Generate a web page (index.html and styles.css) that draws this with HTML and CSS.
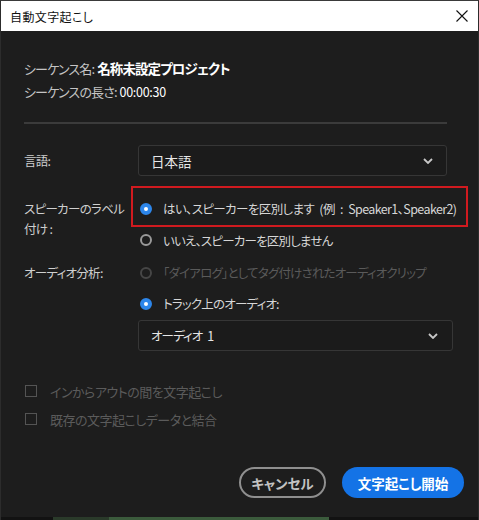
FILE: index.html
```html
<!DOCTYPE html>
<html lang="ja">
<head>
<meta charset="utf-8">
<title>自動文字起こし</title>
<link rel="stylesheet" href="styles.css">
</head>
<body>
<div class="window">
  <div class="titlebar">
    <span class="title">自動文字起こし</span>
    <svg class="close" width="12" height="12" viewBox="0 0 12 12"><path d="M0.5 0.5 L11.5 11.5 M11.5 0.5 L0.5 11.5" stroke="#111" stroke-width="1.1" fill="none"/></svg>
  </div>
  <div class="content">
    <div class="info">
      <div class="info-line"><span class="lbl">シーケンス名:</span> <span class="val bold">名称未設定プロジェクト</span></div>
      <div class="info-line"><span class="lbl">シーケンスの長さ:</span> <span class="val">00:00:30</span></div>
    </div>
    <div class="sep"></div>

    <div class="row row-lang">
      <div class="label">言語:</div>
      <div class="select sel-lang">
        <span>日本語</span>
        <svg width="10" height="6" viewBox="0 0 10 6"><path d="M1 1 L5 5 L9 1" stroke="#c8c8c8" stroke-width="1.8" fill="none"/></svg>
      </div>
    </div>

    <div class="row row-speaker">
      <div class="label label-2">スピーカーのラベル<br>付け :</div>
      <div class="opts">
        <div class="highlight">
          <div class="opt"><span class="radio on"></span><span class="otext wide">はい、スピーカーを区別します (例 : Speaker1、Speaker2)</span></div>
        </div>
        <div class="opt opt-2"><span class="radio"></span><span class="otext">いいえ、スピーカーを区別しません</span></div>
      </div>
    </div>

    <div class="row row-audio">
      <div class="label label-audio">オーディオ分析:</div>
      <div class="opts">
        <div class="opt opt-h"><span class="radio dis"></span><span class="otext dim">「ダイアログ」としてタグ付けされたオーディオクリップ</span></div>
        <div class="opt opt-h"><span class="radio on"></span><span class="otext">トラック上のオーディオ:</span></div>
        <div class="select sel-track">
          <span>オーディオ 1</span>
          <svg width="10" height="6" viewBox="0 0 10 6"><path d="M1 1 L5 5 L9 1" stroke="#c8c8c8" stroke-width="1.8" fill="none"/></svg>
        </div>
      </div>
    </div>

    <div class="checks">
      <div class="check"><span class="box"></span><span class="ctext">インからアウトの間を文字起こし</span></div>
      <div class="check"><span class="box"></span><span class="ctext">既存の文字起こしデータと結合</span></div>
    </div>

    <div class="buttons">
      <button class="btn btn-cancel">キャンセル</button>
      <button class="btn btn-primary">文字起こし開始</button>
    </div>
  </div>
  <div class="taskstrip"><span class="seg-a"></span><span class="seg-b"></span></div>
</div>
</body>
</html>
```

FILE: styles.css
```css
* { box-sizing: border-box; }
html, body { margin: 0; padding: 0; }
body {
  width: 479px;
  height: 520px;
  overflow: hidden;
  background: #1d1d1d;
  font-family: "Noto Sans CJK JP", "Noto Sans", sans-serif;
  font-feature-settings: "palt";
  color: #cfcfcf;
}
.window {
  width: 479px;
  height: 520px;
  display: flex;
  flex-direction: column;
  border-left: 1px solid #2c2c2c;
  border-right: 1px solid #2c2c2c;
  border-top: 1px solid #3a3a3a;
  background: #1d1d1d;
}
.titlebar {
  height: 30px;
  flex: 0 0 30px;
  background: #ffffff;
  display: flex;
  align-items: center;
  justify-content: space-between;
  padding: 0 9px 0 9px;
}
.title {
  font-size: 12px;
  color: #111;
  letter-spacing: 0.4px;
}
.close { display: block; margin-right: 1px; }

.content {
  flex: 1;
  padding: 0 0 0 23px;
  display: flex;
  flex-direction: column;
}
.info { margin-top: 25px; }
.info-line {
  height: 24px;
  line-height: 24px;
  font-size: 13px;
}
.lbl { color: #c4c4c4; letter-spacing: -0.85px; }
.val { color: #ffffff; font-size: 12.5px; letter-spacing: -0.3px; }
.val.bold { font-weight: 700; font-size: 13.5px; letter-spacing: -0.9px; }

.sep {
  margin-top: 18px;
  width: 423px;
  height: 2px;
  background: #3b3b3b;
}

.row { display: flex; }
.label {
  width: 114px;
  flex: 0 0 114px;
  font-size: 12.5px;
  letter-spacing: -0.7px;
  color: #cfcfcf;
  white-space: nowrap;
}
.row-lang { margin-top: 21px; align-items: center; }

.select {
  display: flex;
  align-items: center;
  justify-content: space-between;
  height: 31px;
  border: 1px solid #363636;
  border-radius: 3px;
  background: #1b1b1b;
  padding: 0 13px 0 12px;
  font-size: 13px;
  color: #e6e6e6;
}
.select svg { display: block; }
.sel-lang { width: 309px; font-size: 13.5px; }
.sel-track { width: 315px; margin-top: 1px; padding-right: 14px; letter-spacing: -0.9px; font-size: 12.5px; word-spacing: 3px; }

.row-speaker { margin-top: 10px; }
.label-2 { line-height: 20px; padding-top: 13px; }
.opts { display: flex; flex-direction: column; }
.highlight {
  margin-left: -7px;
  width: 337px;
  height: 41px;
  border: 2px solid #d11a1f;
  padding: 4px 0 0 5px;
  display: flex;
  align-items: center;
}
.opt {
  display: flex;
  align-items: center;
  font-size: 12.5px;
  color: #d6d6d6;
}
.opt-2 { height: 26px; }
.opt-h { height: 31px; }
.radio {
  width: 12px;
  height: 12px;
  border-radius: 50%;
  border: 2px solid #9a9a9a;
  margin: 0 11px 0 2px;
  flex: 0 0 12px;
  position: relative;
}
.radio.on {
  background: #2d86ea;
  border-color: #2d86ea;
}
.radio.on::after {
  content: "";
  position: absolute;
  left: 2px;
  top: 2px;
  width: 4px;
  height: 4px;
  border-radius: 50%;
  background: #ffffff;
}
.radio.dis { border-color: #464646; }
.otext { white-space: nowrap; letter-spacing: -0.8px; }
.otext.wide { letter-spacing: -0.6px; word-spacing: 3px; }
.otext.dim { color: #5a5a5a; }

.row-audio { margin-top: 4px; }
.label-audio { height: 31px; line-height: 31px; }

.checks { margin-top: 26px; display: flex; flex-direction: column; }
.check {
  height: 28px;
  display: flex;
  align-items: center;
  font-size: 13px;
  letter-spacing: -0.5px;
  color: #5b5b5b;
}
.box {
  width: 12px;
  height: 12px;
  border: 1.5px solid #545454;
  margin: 0 13px 0 1px;
}

.buttons {
  margin-top: 34px;
  display: flex;
  justify-content: flex-end;
  gap: 16px;
  padding-right: 14px;
}
.btn {
  height: 31px;
  border-radius: 16px;
  font-family: "Noto Sans CJK JP", "Noto Sans", sans-serif;
  font-feature-settings: "palt";
  font-size: 13.5px;
  font-weight: 700;
  padding: 0;
}
.btn-cancel {
  width: 87px;
  background: transparent;
  border: 2px solid #8f8f8f;
  color: #c2c2c2;
}
.btn-primary {
  width: 122px;
  background: #1473e6;
  border: none;
  color: #ffffff;
}

.taskstrip {
  height: 3px;
  flex: 0 0 3px;
  background: #121212;
  display: flex;
  padding-left: 52px;
}
.seg-a { width: 56px; background: #2a3a2a; }
.seg-b { width: 220px; background: #3b5b3c; }
```
